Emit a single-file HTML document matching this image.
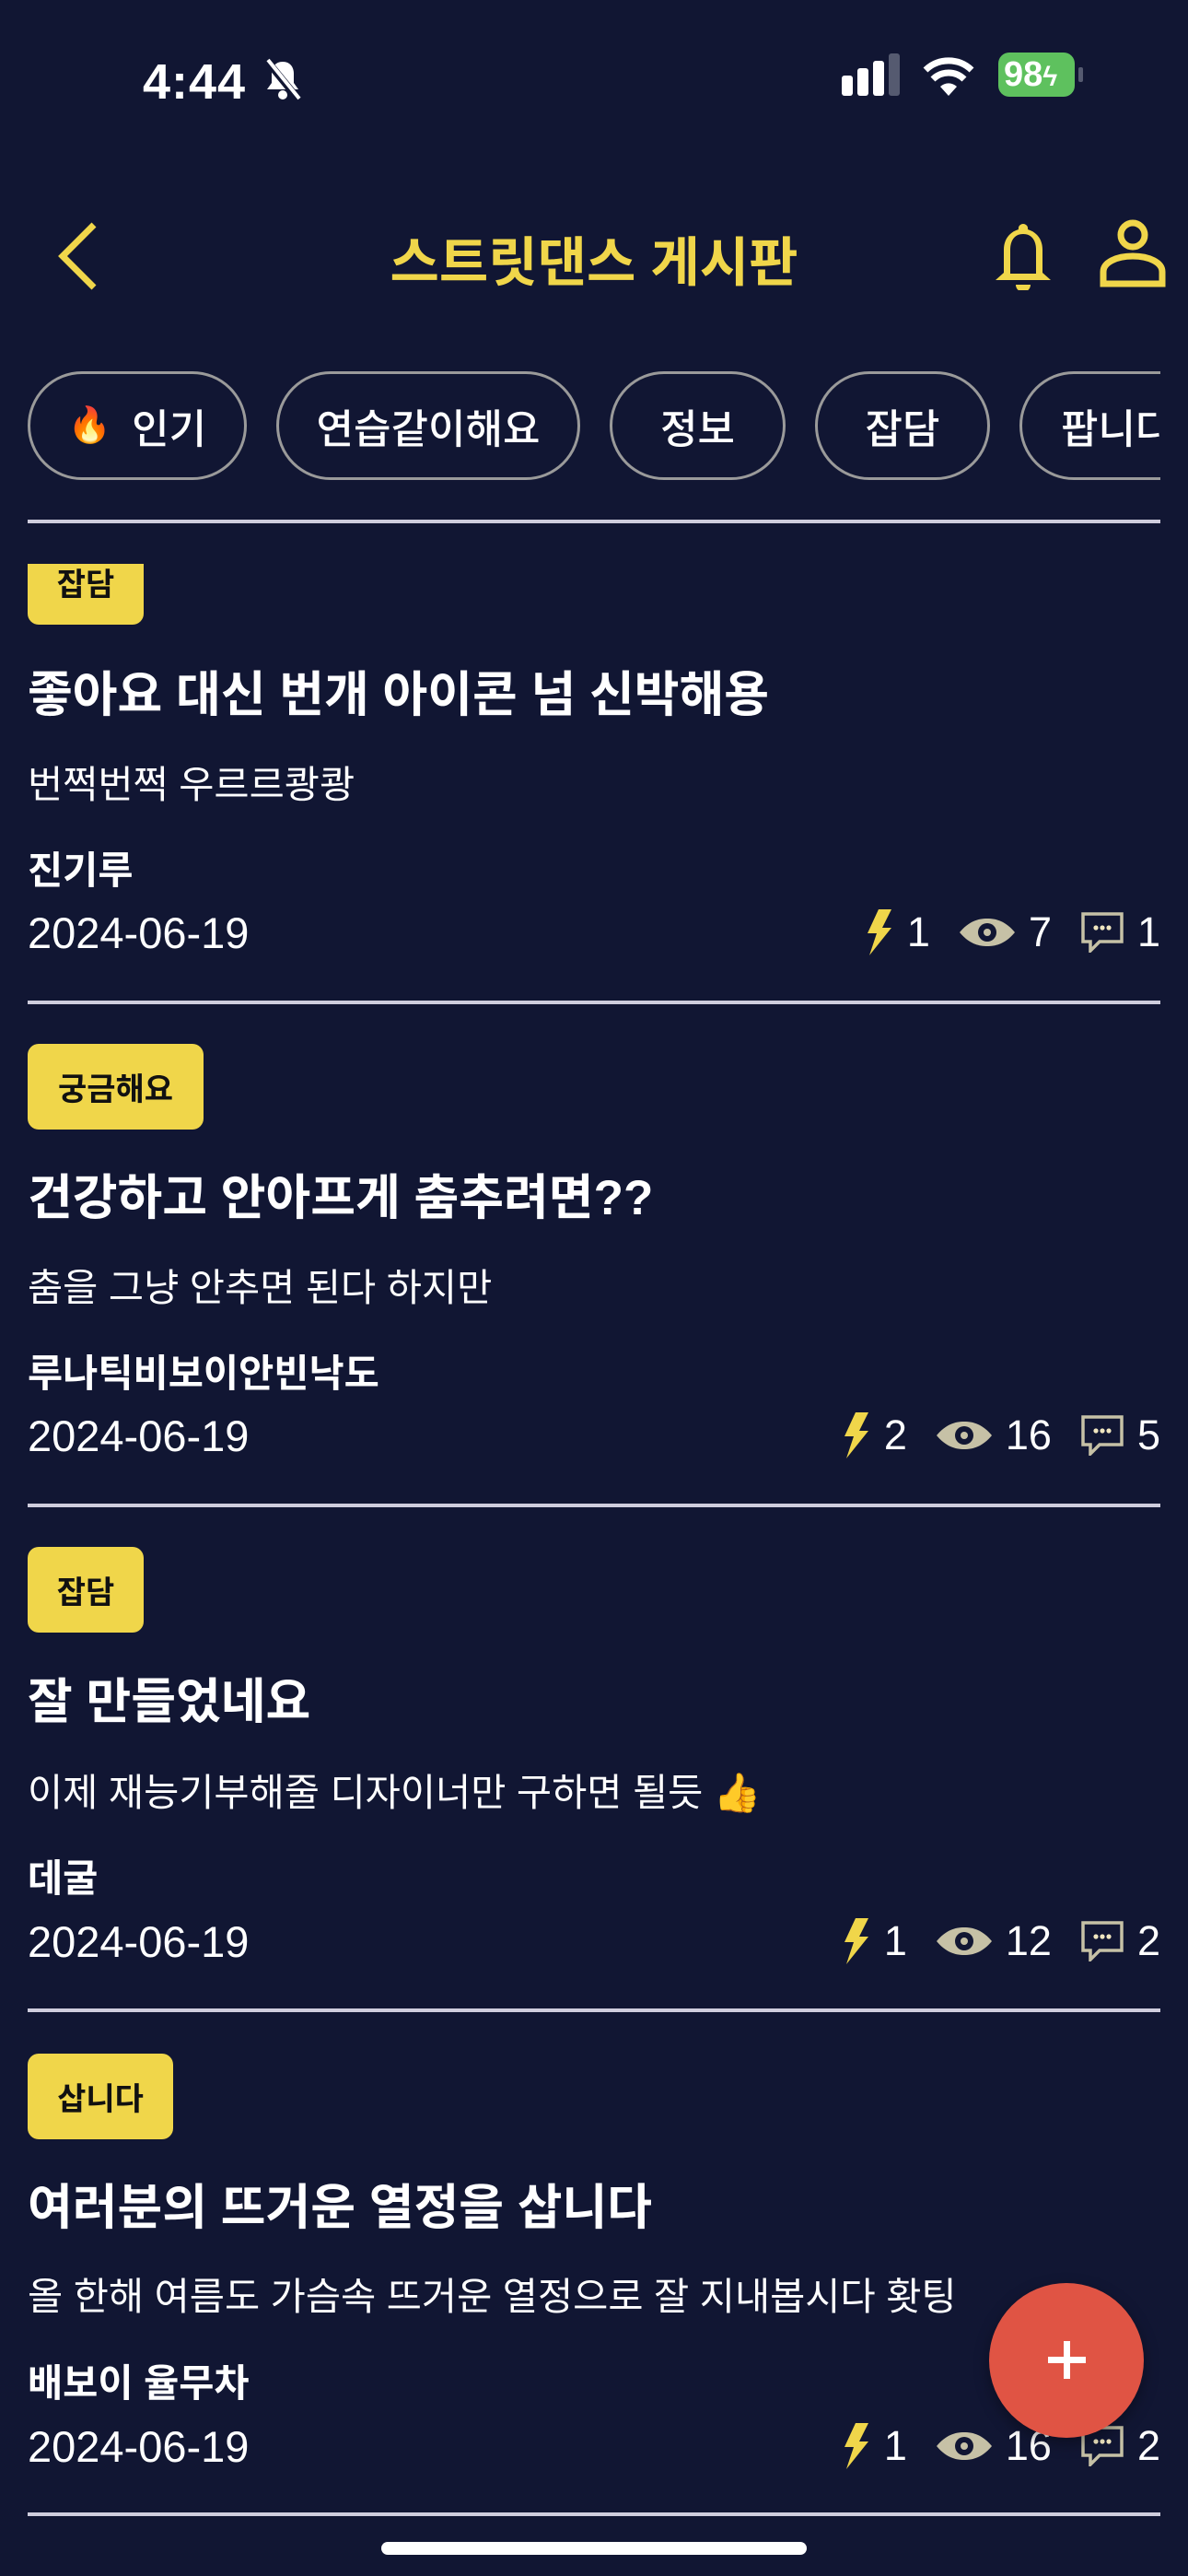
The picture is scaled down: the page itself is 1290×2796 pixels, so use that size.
<!DOCTYPE html>
<html><head><meta charset="utf-8"><style>
*{margin:0;padding:0;box-sizing:border-box}
body{width:1290px;height:2796px;background:#111633;overflow:hidden;position:relative;font-family:"Liberation Sans","Noto Sans CJK KR",sans-serif;color:#fff}
.abs{position:absolute}
.time{left:155px;top:58px;font-size:54px;font-weight:bold;letter-spacing:1px}
.title{left:0;width:1290px;text-align:center;top:238px;font-size:58px;font-weight:bold;color:#f0d64a}
.chip{position:absolute;top:403px;height:118px;border:3px solid #9a9a9a;border-radius:59px;font-size:44px;display:flex;align-items:center;justify-content:center;font-weight:500}
.div{position:absolute;left:30px;width:1230px;height:4px;background:#cfcddd}
.tag{position:absolute;left:30px;height:93px;background:#f0d64a;color:#111;border-radius:12px;font-size:34px;font-weight:bold;display:flex;align-items:center;justify-content:center}
.pt{position:absolute;left:30px;font-size:53px;font-weight:bold;white-space:nowrap}
.pb{position:absolute;left:30px;font-size:41.5px;white-space:nowrap}
.pa{position:absolute;left:30px;font-size:41.5px;font-weight:bold;white-space:nowrap}
.pd{position:absolute;left:30px;font-size:47px;white-space:nowrap}
.st{position:absolute;right:30px;height:60px;display:flex;align-items:center;font-size:45px}
.st span{margin-left:15px}
.st svg{margin-left:32px}
.st svg:first-child{margin-left:0}
</style></head><body>
<div class="abs time">4:44</div>
<svg class="abs" style="left:285px;top:63px" width="44" height="48" viewBox="0 0 44 48"><path d="M22 4c-8 0-12 6-12 13v10l-5 7h34l-5-7V17c0-7-4-13-12-13z" fill="#fff"/><circle cx="22" cy="40" r="5" fill="#fff"/><path d="M4 2l36 44" stroke="#111633" stroke-width="8"/><path d="M6 2l34 42" stroke="#fff" stroke-width="4"/></svg>
<div class="abs" style="left:914px;top:82px;width:12px;height:22px;background:#fff;border-radius:3px"></div>
<div class="abs" style="left:931px;top:74px;width:12px;height:30px;background:#fff;border-radius:3px"></div>
<div class="abs" style="left:948px;top:66px;width:12px;height:38px;background:#fff;border-radius:3px"></div>
<div class="abs" style="left:965px;top:58px;width:12px;height:46px;background:#555a70;border-radius:3px"></div>
<svg class="abs" style="left:1000px;top:58px" width="60" height="48" viewBox="0 0 60 48"><path d="M30 46L21 36a13 13 0 0 1 18 0z" fill="#fff"/><path d="M13 28a24 24 0 0 1 34 0" stroke="#fff" stroke-width="7" fill="none"/><path d="M5 18a36 36 0 0 1 50 0" stroke="#fff" stroke-width="7" fill="none"/></svg>
<div class="abs" style="left:1084px;top:57px;width:83px;height:48px;background:#5ec15e;border-radius:12px;font-size:38px;font-weight:bold;line-height:48px;padding-left:6px">98<span style="font-size:30px">ϟ</span></div>
<div class="abs" style="left:1171px;top:73px;width:5px;height:16px;background:#555a70;border-radius:2px"></div>

<svg class="abs" style="left:58px;top:240px" width="50" height="80" viewBox="0 0 50 80"><path d="M44 4L10 38l34 34" stroke="#f0d64a" stroke-width="7" fill="none" stroke-linejoin="miter"/></svg>
<div class="abs title">스트릿댄스 게시판</div>
<svg class="abs" style="left:1079px;top:237px" width="64" height="78" viewBox="0 0 64 78"><path d="M32 6a5 5 0 0 1 5 6c10 3 16 11 16 22v25l9 8H2l9-8V34c0-11 6-19 16-22a5 5 0 0 1 5-6z" fill="#f0d64a"/><path d="M32 17c-10 0-14 8-14 17v26h28V34c0-9-4-17-14-17z" fill="#111633"/><path d="M24 72h16a8 8 0 0 1-16 0z" fill="#f0d64a"/></svg>
<svg class="abs" style="left:1194px;top:238px" width="72" height="74" viewBox="0 0 72 74"><circle cx="36" cy="17" r="13" fill="none" stroke="#f0d64a" stroke-width="7"/><path d="M4 70V57c0-10 14-17 32-17s32 7 32 17v13z" fill="none" stroke="#f0d64a" stroke-width="7"/></svg>

<div class="chip" style="left:30px;width:238px"><span style="font-size:38px;margin-right:22px">🔥</span>인기</div>
<div class="chip" style="left:300px;width:330px">연습같이해요</div>
<div class="chip" style="left:662px;width:191px">정보</div>
<div class="chip" style="left:885px;width:190px">잡담</div>
<div style="position:absolute;left:1107px;top:0;width:153px;height:600px;overflow:hidden"><div class="chip" style="left:0;width:220px;justify-content:flex-start;padding-left:42px">팝니다</div></div>
<div class="div" style="top:564px"></div>

<!-- post 1 -->
<div style="position:absolute;left:0;top:612px;width:1290px;height:80px;overflow:hidden"><div class="tag" style="top:-27px;width:126px">잡담</div></div>
<div class="pt" style="top:712px">좋아요 대신 번개 아이콘 넘 신박해용</div>
<div class="pb" style="top:818px">번쩍번쩍 우르르쾅쾅</div>
<div class="pa" style="top:911px">진기루</div>
<div class="pd" style="top:985px">2024-06-19</div>
<div class="st" style="top:982px">
<svg width="30" height="50" viewBox="0 0 30 50"><path d="M14 0h14L18 20h10L4 50l8-24H2z" fill="#f0d64a"/></svg><span>1</span>
<svg width="60" height="30" viewBox="0 0 60 30"><path d="M0 15C10 3 20 0 30 0s20 3 30 15C50 27 40 30 30 30S10 27 0 15z" fill="#c6c1a6"/><circle cx="30" cy="15" r="10" fill="#111633"/><circle cx="30" cy="15" r="4" fill="#c6c1a6"/></svg><span>7</span>
<svg width="46" height="44" viewBox="0 0 46 44"><path d="M2 2h42v30H20L10 42V32H2z" fill="none" stroke="#c6c1a6" stroke-width="3.5"/><circle cx="16" cy="17" r="2.6" fill="#f0e6c0"/><circle cx="23" cy="17" r="2.6" fill="#f0e6c0"/><circle cx="30" cy="17" r="2.6" fill="#f0e6c0"/></svg><span>1</span>
</div>
<div class="div" style="top:1086px"></div>

<!-- post 2 -->
<div class="tag" style="top:1133px;width:191px">궁금해요</div>
<div class="pt" style="top:1258px">건강하고 안아프게 춤추려면??</div>
<div class="pb" style="top:1364px">춤을 그냥 안추면 된다 하지만</div>
<div class="pa" style="top:1457px">루나틱비보이안빈낙도</div>
<div class="pd" style="top:1531px">2024-06-19</div>
<div class="st" style="top:1528px">
<svg width="30" height="50" viewBox="0 0 30 50"><path d="M14 0h14L18 20h10L4 50l8-24H2z" fill="#f0d64a"/></svg><span>2</span>
<svg width="60" height="30" viewBox="0 0 60 30"><path d="M0 15C10 3 20 0 30 0s20 3 30 15C50 27 40 30 30 30S10 27 0 15z" fill="#c6c1a6"/><circle cx="30" cy="15" r="10" fill="#111633"/><circle cx="30" cy="15" r="4" fill="#c6c1a6"/></svg><span>16</span>
<svg width="46" height="44" viewBox="0 0 46 44"><path d="M2 2h42v30H20L10 42V32H2z" fill="none" stroke="#c6c1a6" stroke-width="3.5"/><circle cx="16" cy="17" r="2.6" fill="#f0e6c0"/><circle cx="23" cy="17" r="2.6" fill="#f0e6c0"/><circle cx="30" cy="17" r="2.6" fill="#f0e6c0"/></svg><span>5</span>
</div>
<div class="div" style="top:1632px"></div>

<!-- post 3 -->
<div class="tag" style="top:1679px;width:126px">잡담</div>
<div class="pt" style="top:1805px">잘 만들었네요</div>
<div class="pb" style="top:1912px">이제 재능기부해줄 디자이너만 구하면 될듯 👍</div>
<div class="pa" style="top:2005px">데굴</div>
<div class="pd" style="top:2080px">2024-06-19</div>
<div class="st" style="top:2077px">
<svg width="30" height="50" viewBox="0 0 30 50"><path d="M14 0h14L18 20h10L4 50l8-24H2z" fill="#f0d64a"/></svg><span>1</span>
<svg width="60" height="30" viewBox="0 0 60 30"><path d="M0 15C10 3 20 0 30 0s20 3 30 15C50 27 40 30 30 30S10 27 0 15z" fill="#c6c1a6"/><circle cx="30" cy="15" r="10" fill="#111633"/><circle cx="30" cy="15" r="4" fill="#c6c1a6"/></svg><span>12</span>
<svg width="46" height="44" viewBox="0 0 46 44"><path d="M2 2h42v30H20L10 42V32H2z" fill="none" stroke="#c6c1a6" stroke-width="3.5"/><circle cx="16" cy="17" r="2.6" fill="#f0e6c0"/><circle cx="23" cy="17" r="2.6" fill="#f0e6c0"/><circle cx="30" cy="17" r="2.6" fill="#f0e6c0"/></svg><span>2</span>
</div>
<div class="div" style="top:2180px"></div>

<!-- post 4 -->
<div class="tag" style="top:2229px;width:158px">삽니다</div>
<div class="pt" style="top:2354px">여러분의 뜨거운 열정을 삽니다</div>
<div class="pb" style="top:2459px">올 한해 여름도 가슴속 뜨거운 열정으로 잘 지내봅시다 홧팅</div>
<div class="pa" style="top:2553px">배보이 율무차</div>
<div class="pd" style="top:2628px">2024-06-19</div>
<div class="st" style="top:2625px">
<svg width="30" height="50" viewBox="0 0 30 50"><path d="M14 0h14L18 20h10L4 50l8-24H2z" fill="#f0d64a"/></svg><span>1</span>
<svg width="60" height="30" viewBox="0 0 60 30"><path d="M0 15C10 3 20 0 30 0s20 3 30 15C50 27 40 30 30 30S10 27 0 15z" fill="#c6c1a6"/><circle cx="30" cy="15" r="10" fill="#111633"/><circle cx="30" cy="15" r="4" fill="#c6c1a6"/></svg><span>16</span>
<svg width="46" height="44" viewBox="0 0 46 44"><path d="M2 2h42v30H20L10 42V32H2z" fill="none" stroke="#c6c1a6" stroke-width="3.5"/><circle cx="16" cy="17" r="2.6" fill="#f0e6c0"/><circle cx="23" cy="17" r="2.6" fill="#f0e6c0"/><circle cx="30" cy="17" r="2.6" fill="#f0e6c0"/></svg><span>2</span>
</div>
<div class="div" style="top:2727px"></div>

<div class="abs" style="left:1074px;top:2478px;width:168px;height:168px;border-radius:50%;background:#e05444;box-shadow:0 6px 16px rgba(0,0,0,0.35)"></div>
<div class="abs" style="left:1138px;top:2558px;width:41px;height:7px;background:#fff"></div>
<div class="abs" style="left:1155px;top:2541px;width:7px;height:41px;background:#fff"></div>

<div class="abs" style="left:414px;top:2759px;width:462px;height:14px;border-radius:7px;background:#fff"></div>
</body></html>
